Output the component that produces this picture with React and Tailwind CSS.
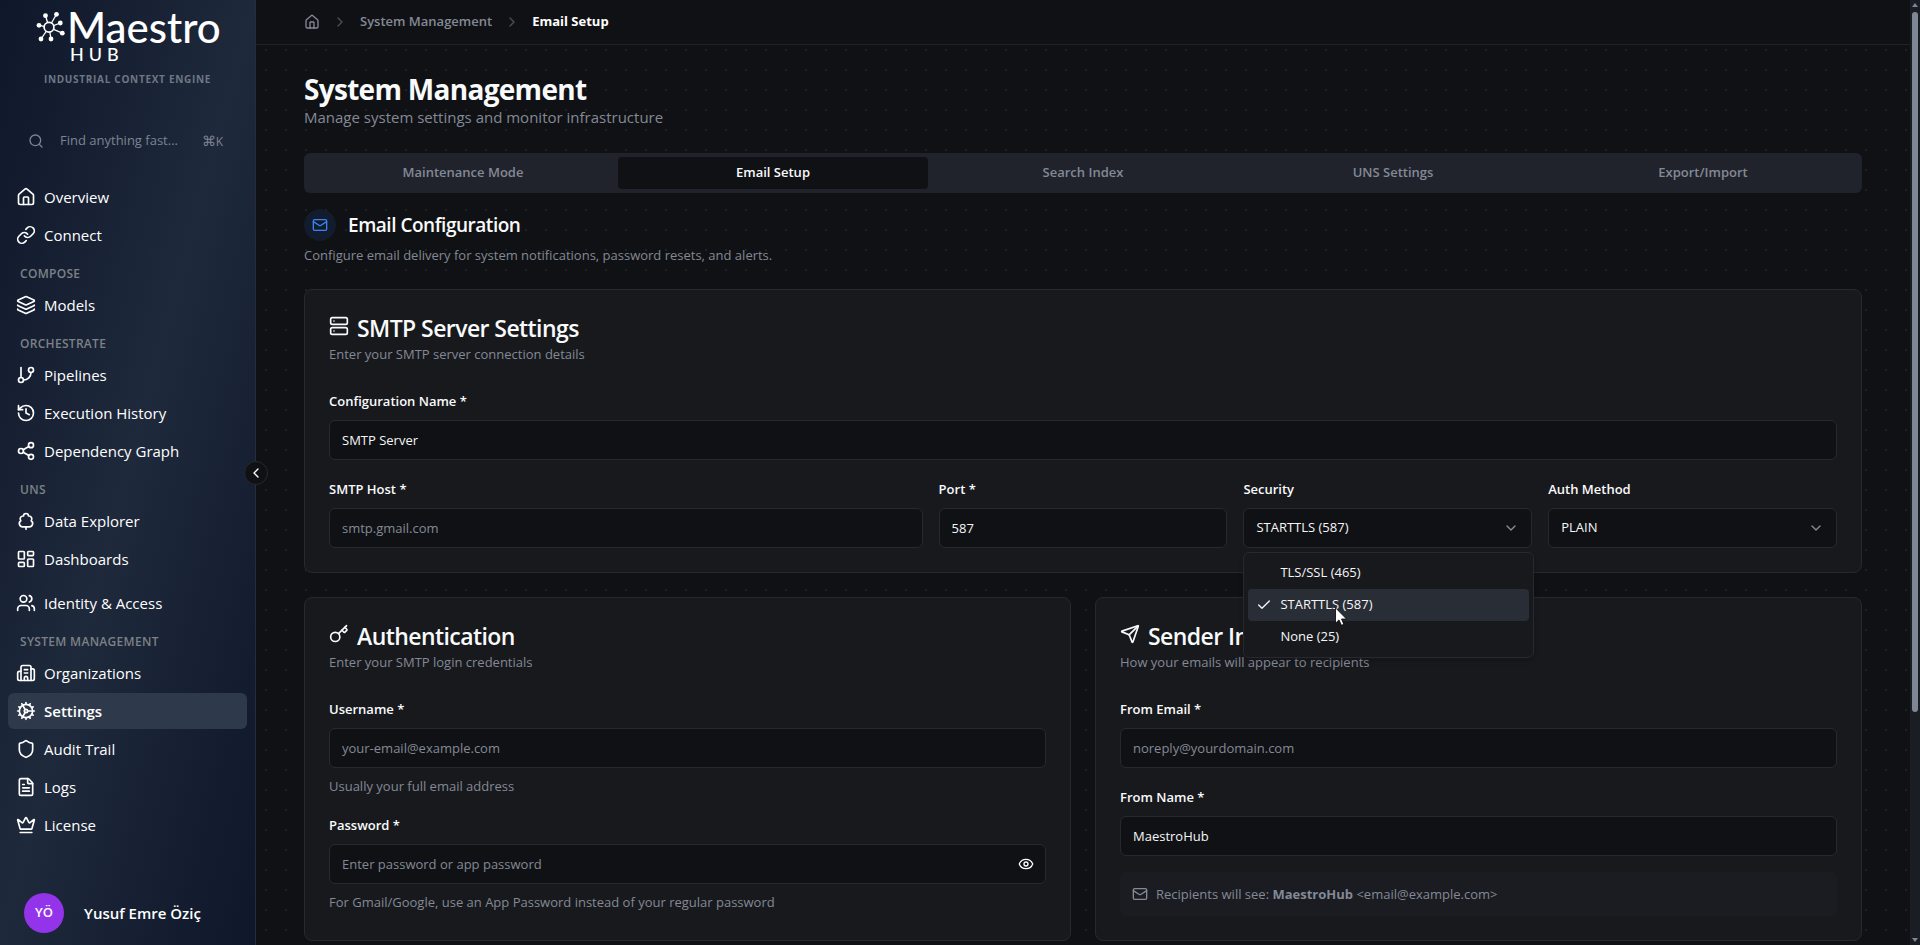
import React, { useState } from "react";
import {
  House,
  Link,
  Layers,
  GitBranch,
  History,
  Share2,
  TreeDeciduous,
  LayoutDashboard,
  Users,
  Building2,
  Cog,
  Shield,
  FileText,
  Crown,
  Search,
  ChevronLeft,
  ChevronRight,
  ChevronDown,
  Mail,
  Server,
  Key,
  Send,
  Eye,
  Check,
} from "lucide-react";

const menu = [
  {
    items: [
      { name: "Overview", icon: House },
      { name: "Connect", icon: Link },
    ],
  },
  { title: "Compose", items: [{ name: "Models", icon: Layers }] },
  {
    title: "Orchestrate",
    items: [
      { name: "Pipelines", icon: GitBranch },
      { name: "Execution History", icon: History },
      { name: "Dependency Graph", icon: Share2 },
    ],
  },
  {
    title: "UNS",
    items: [
      { name: "Data Explorer", icon: TreeDeciduous },
      { name: "Dashboards", icon: LayoutDashboard },
    ],
  },
  { spaced: true, items: [{ name: "Identity & Access", icon: Users }] },
  {
    title: "System Management",
    items: [
      { name: "Organizations", icon: Building2 },
      { name: "Settings", icon: Cog, active: true },
      { name: "Audit Trail", icon: Shield },
      { name: "Logs", icon: FileText },
      { name: "License", icon: Crown },
    ],
  },
];

const tabs = [
  "Maintenance Mode",
  "Email Setup",
  "Search Index",
  "UNS Settings",
  "Export/Import",
];

const securityOptions = ["TLS/SSL (465)", "STARTTLS (587)", "None (25)"];

const Logo = () => {
  const nodes = [
    [9.5, 4.7],
    [20.5, 3.3],
    [24.3, 12],
    [26.3, 22.2],
    [15, 28],
    [5, 28],
    [3, 14.3],
  ];
  return (
    <div className="flex pl-9 text-white">
      <svg
        width="30"
        height="32"
        viewBox="0 0 30 32"
        className="mt-[11px]"
        fill="none"
        stroke="currentColor"
      >
        {nodes.map(([x, y]) => (
          <g key={x + "-" + y}>
            <line x1="13" y1="16.3" x2={x} y2={y} strokeWidth="1.3" />
            <circle cx={x} cy={y} r="2.4" fill="currentColor" stroke="none" />
          </g>
        ))}
        <circle cx="13" cy="16.3" r="4.9" fill="#151e31" strokeWidth="1.7" />
      </svg>
      <div className="pl-px font-['Lato',sans-serif] font-medium">
        <div className="text-[42px] leading-[54px]">Maestro</div>
        <div className="-mt-2 pl-[3px] text-lg leading-4 tracking-[5px]">
          HUB
        </div>
      </div>
    </div>
  );
};

const NavItem = ({ item }) => {
  const Icon = item.icon;
  return (
    <a
      href="#"
      className={
        item.active
          ? "flex h-9 items-center gap-2 rounded-md bg-[#2e3a4b] px-2 font-semibold text-white"
          : "flex h-9 items-center gap-2 rounded-md px-2 text-white"
      }
    >
      <Icon size={20} strokeWidth={2} className="shrink-0" />
      {item.name}
    </a>
  );
};

const Sidebar = () => {
  return (
    <aside className="relative flex w-64 shrink-0 flex-col border-r border-[#262d38] bg-linear-to-br from-[#0f172a] via-[#1e293b] to-[#0f172a]">
      <Logo />
      <p className="mt-[7px] text-center text-[10px] leading-5 font-bold tracking-[0.07em] text-[#6f7785] uppercase">
        Industrial Context Engine
      </p>
      <button className="mx-4 mt-8 flex h-10 items-center px-3 text-left text-[13px] text-[#7c8492]">
        <Search size={16} />
        <span className="ml-4 flex-1">Find anything fast...</span>
        <span className="mr-1 text-sm">
          ⌘<span className="text-xs">K</span>
        </span>
      </button>
      <nav className="mt-[18px] flex-1 px-2 text-[15px]">
        {menu.map((group, i) => (
          <div key={i} className={group.spaced ? "pt-2" : ""}>
            {group.title && (
              <h3 className="px-3 pt-3 pb-1 text-xs leading-[18px] font-semibold tracking-wide text-[#7c8187] uppercase">
                {group.title}
              </h3>
            )}
            <div className="flex flex-col gap-0.5">
              {group.items.map((item) => (
                <NavItem key={item.name} item={item} />
              ))}
            </div>
          </div>
        ))}
      </nav>
      <div className="flex items-center gap-5 px-6 pb-3">
        <span className="flex size-10 items-center justify-center rounded-full bg-[#9333ea] text-[13px] font-semibold text-white">
          YÖ
        </span>
        <span className="text-[15px] font-semibold text-white">
          Yusuf Emre Öziç
        </span>
      </div>
      <button
        aria-label="Collapse sidebar"
        className="absolute top-1/2 -right-[13px] z-10 flex size-6 -translate-y-1/2 items-center justify-center rounded-full border border-[#26292f] bg-[#101114] text-white"
      >
        <ChevronLeft size={16} />
      </button>
    </aside>
  );
};

const Field = ({ id, label, help, children, className }) => {
  return (
    <div className={className}>
      <label
        htmlFor={id}
        className="mb-2.5 block text-[13px] leading-[18px] font-semibold text-[#f9fafb]"
      >
        {label}
      </label>
      {children}
      {help && (
        <p className="mt-2 text-[13px] leading-5 text-[#838996]">{help}</p>
      )}
    </div>
  );
};

const Input = (props) => {
  return (
    <input
      {...props}
      className="h-10 w-full rounded-md border border-[#26292f] bg-[#101114] px-3 text-[13px] text-[#f5f6f8] outline-none placeholder:text-[#838996]"
    />
  );
};

const Select = ({ id, value, options, onChange }) => {
  return (
    <div className="relative">
      <select
        id={id}
        value={value}
        onChange={onChange}
        className="h-10 w-full appearance-none rounded-md border border-[#26292f] bg-[#101114] px-3 text-[13px] text-[#f5f6f8] outline-none"
      >
        {options.map((o) => (
          <option key={o}>{o}</option>
        ))}
      </select>
      <ChevronDown
        size={16}
        className="pointer-events-none absolute top-3 right-[13px] text-[#8a8c90]"
      />
    </div>
  );
};

const Card = ({ icon: Icon, title, description, children }) => {
  return (
    <section className="rounded-lg border border-[#26292f] bg-[#18191d] p-6">
      <h3 className="flex items-center gap-2 text-[23px] leading-7 font-semibold tracking-tight text-[#f9fafb]">
        <Icon size={20} className="-mt-1" />
        {title}
      </h3>
      <p className="mt-0.5 mb-7 text-[13px] leading-5 text-[#838996]">
        {description}
      </p>
      <div className="flex flex-col gap-5">{children}</div>
    </section>
  );
};

const Scrollbar = () => {
  return (
    <div className="flex w-2.5 shrink-0 flex-col items-center bg-[#1b1d24] text-[#7f8694]">
      <svg width="10" height="12" viewBox="0 0 10 12" fill="currentColor">
        <path d="M5 3 L8 7 H2 Z" />
      </svg>
      <div className="w-1.5 grow-[700] rounded-full bg-[#7f8694]" />
      <div className="grow-[221]" />
      <svg width="10" height="12" viewBox="0 0 10 12" fill="currentColor">
        <path d="M5 9 L8 5 H2 Z" />
      </svg>
    </div>
  );
};

const App = () => {
  const [security, setSecurity] = useState("STARTTLS (587)");

  return (
    <div className="flex h-screen overflow-hidden bg-[#101114] font-['Open_Sans',sans-serif]">
      <Sidebar />
      <main className="flex min-w-0 flex-1 flex-col overflow-hidden bg-[radial-gradient(circle,#1f2227_1px,transparent_1px)] bg-size-[20px_20px]">
        <header className="h-[45px] shrink-0 border-b border-[#1e2126] bg-[#101114] px-12">
          <nav className="flex h-full items-center gap-3 text-[13px]">
            <a href="#" aria-label="Home" className="text-[#838996]">
              <House size={16} />
            </a>
            <ChevronRight size={16} className="text-[#4a4e57]" />
            <a href="#" className="font-semibold text-[#838996]">
              System Management
            </a>
            <ChevronRight size={16} className="text-[#4a4e57]" />
            <span className="font-bold text-white">Email Setup</span>
          </nav>
        </header>

        <div className="px-12 pt-7">
          <h1 className="text-[28px] leading-8 font-bold tracking-tight text-[#f9fafb]">
            System Management
          </h1>
          <p className="text-[15px] leading-6 text-[#838996]">
            Manage system settings and monitor infrastructure
          </p>

          <div
            role="tablist"
            className="mt-6 grid h-10 grid-cols-5 rounded-md bg-[#20232b] p-1"
          >
            {tabs.map((tab) => (
              <button
                key={tab}
                role="tab"
                className={
                  tab === "Email Setup"
                    ? "rounded-sm bg-[#101114] text-[13px] font-semibold text-[#f9fafb]"
                    : "rounded-sm text-[13px] font-semibold text-[#838996]"
                }
              >
                {tab}
              </button>
            ))}
          </div>

          <div className="mt-4 flex items-center gap-3">
            <span className="flex size-8 items-center justify-center rounded-full bg-[#121c2c] text-[#3b82f6]">
              <Mail size={16} />
            </span>
            <h2 className="text-[19px] leading-8 font-semibold tracking-tight text-[#f9fafb]">
              Email Configuration
            </h2>
          </div>
          <p className="mt-1 mb-6 text-[13px] leading-5 text-[#838996]">
            Configure email delivery for system notifications, password resets,
            and alerts.
          </p>

          <Card
            icon={Server}
            title="SMTP Server Settings"
            description="Enter your SMTP server connection details"
          >
            <Field id="configName" label="Configuration Name *">
              <Input id="configName" defaultValue="SMTP Server" />
            </Field>
            <div className="grid grid-cols-5 gap-4">
              <Field id="host" label="SMTP Host *" className="col-span-2">
                <Input id="host" placeholder="smtp.gmail.com" />
              </Field>
              <Field id="port" label="Port *">
                <Input id="port" defaultValue="587" />
              </Field>
              <Field id="security" label="Security" className="relative">
                <Select
                  id="security"
                  value={security}
                  options={securityOptions}
                  onChange={(e) => setSecurity(e.target.value)}
                />
                <ul
                  role="listbox"
                  className="absolute top-full z-10 mt-1 w-[291px] rounded-md border border-[#26292f] bg-[#18191d] p-1 text-[13px] text-[#f5f6f8] shadow-md"
                >
                  {securityOptions.map((option) => (
                    <li
                      key={option}
                      role="option"
                      aria-selected={option === security}
                      onClick={() => setSecurity(option)}
                      className={
                        option === security
                          ? "relative flex h-8 items-center rounded-sm bg-[#292d36] pl-8"
                          : "relative flex h-8 items-center rounded-sm pl-8"
                      }
                    >
                      {option === security && (
                        <Check size={16} className="absolute left-2" />
                      )}
                      {option}
                      {option === security && (
                        <svg
                          width="12"
                          height="19"
                          viewBox="0 0 12 19"
                          className="absolute top-[18px] left-[87px]"
                        >
                          <path
                            d="M0.5 0.8 V16.2 L4 12.9 L6.4 18.3 L8.8 17.3 L6.5 12 H11.5 Z"
                            fill="#fff"
                            stroke="#000"
                            strokeWidth="0.8"
                          />
                        </svg>
                      )}
                    </li>
                  ))}
                </ul>
              </Field>
              <Field id="auth" label="Auth Method">
                <Select id="auth" options={["PLAIN", "LOGIN"]} />
              </Field>
            </div>
          </Card>

          <div className="mt-6 grid grid-cols-2 gap-6">
            <Card
              icon={Key}
              title="Authentication"
              description="Enter your SMTP login credentials"
            >
              <Field
                id="username"
                label="Username *"
                help="Usually your full email address"
              >
                <Input id="username" placeholder="your-email@example.com" />
              </Field>
              <Field
                id="password"
                label="Password *"
                help="For Gmail/Google, use an App Password instead of your regular password"
              >
                <div className="relative">
                  <Input
                    id="password"
                    type="password"
                    placeholder="Enter password or app password"
                  />
                  <button
                    aria-label="Show password"
                    className="absolute top-3 right-3 text-white"
                  >
                    <Eye size={16} />
                  </button>
                </div>
              </Field>
            </Card>

            <Card
              icon={Send}
              title="Sender Information"
              description="How your emails will appear to recipients"
            >
              <Field id="fromEmail" label="From Email *">
                <Input id="fromEmail" placeholder="noreply@yourdomain.com" />
              </Field>
              <Field id="fromName" label="From Name *">
                <Input id="fromName" defaultValue="MaestroHub" />
              </Field>
              <div className="-mt-1 flex items-center gap-2 rounded-md bg-[#1a1c21] p-3 text-[13px] leading-5 text-[#838996]">
                <Mail size={16} />
                <p>
                  Recipients will see:{" "}
                  <strong className="font-bold">MaestroHub</strong>{" "}
                  &lt;email@example.com&gt;
                </p>
              </div>
            </Card>
          </div>
        </div>
      </main>
      <Scrollbar />
    </div>
  );
};

export default App;
